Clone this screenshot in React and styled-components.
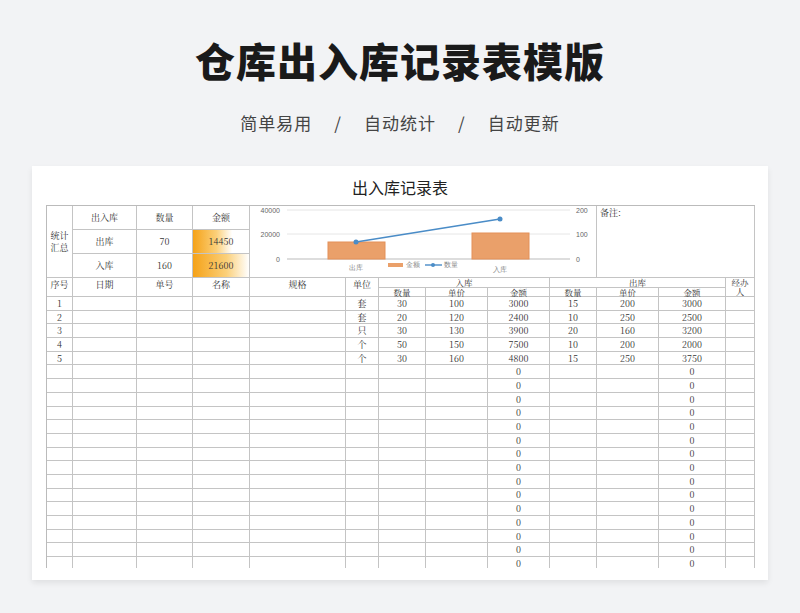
import React from "react";
import styled, { createGlobalStyle } from "styled-components";

const Global = createGlobalStyle`
  html,body{margin:0;padding:0;background:#f2f3f5;}
  body{width:800px;height:613px;overflow:hidden;font-family:"Noto Sans CJK SC","Noto Sans",sans-serif;}
`;
const Page = styled.div`display:flex;flex-direction:column;align-items:center;`;
const Title = styled.h1`margin:34px 0 0;font-size:40px;font-weight:900;color:#1a1a1a;letter-spacing:1px;line-height:52px;`;
const Sub = styled.div`margin-top:24px;font-size:17px;color:#444;letter-spacing:1px;display:flex;gap:22px;`;
const Card = styled.div`margin-top:31px;width:736px;height:414px;background:#fff;box-shadow:0 3px 6px rgba(0,0,0,.08);display:flex;flex-direction:column;align-items:flex-start;padding-left:14px;box-sizing:border-box;`;
const SheetTitle = styled.div`width:708px;text-align:center;font-family:"Noto Sans CJK SC",serif;font-size:16px;color:#222;margin-top:9px;height:30px;line-height:24px;`;
const Clip = styled.div`height:363px;overflow:hidden;width:709px;`;
const cols = "26px 64px 56px 57px 96px 33px 47px 62px 62px 47px 62px 67px 29px";
const Grid = styled.div`
  display:grid;grid-template-columns:${cols};
  grid-template-rows:24px 24px 24px 10px 9px repeat(20,13.7px);
  border-left:1px solid #bbb;border-top:1px solid #bbb;
  font-family:"Noto Serif CJK SC","Noto Sans CJK SC",serif;font-size:9px;color:#333;
`;
const Cell = styled.div`
  border-right:1px solid #c4c4c4;border-bottom:1px solid #c4c4c4;
  display:flex;align-items:center;justify-content:center;line-height:${p=>p.lh||1};
  text-align:center;white-space:nowrap;
  grid-column:${p=>p.c||"auto"};grid-row:${p=>p.r||"auto"};
  background:${p=>p.g?`linear-gradient(90deg,#f5a218 0%,#fbd07a ${p.g*0.6}%,#fff ${p.g}%)`:"#fff"};
  ${p=>p.top?"align-items:flex-start;justify-content:flex-start;padding:2px 3px;":""}
  ${p=>p.sm?"font-size:8.5px;":""}
`;
const Chart = styled.div`grid-column:5 / 11;grid-row:1 / 4;border-bottom:1px solid #c4c4c4;border-right:1px solid #c4c4c4;`;

function ChartSvg(){
  return (
    <svg width="350" height="72" viewBox="0 0 350 72" style={{display:"block",fontFamily:"Liberation Sans,sans-serif"}}>
      {[4,28,53].map(y=><line key={y} x1="37" x2="320" y1={y} y2={y} stroke={y===53?"#bbb":"#e6e6e6"} strokeWidth="1"/>)}
      <text x="30" y="7" fontSize="7" fill="#666" textAnchor="end">40000</text>
      <text x="30" y="31" fontSize="7" fill="#666" textAnchor="end">20000</text>
      <text x="30" y="56" fontSize="7" fill="#666" textAnchor="end">0</text>
      <text x="326" y="7" fontSize="7" fill="#666">200</text>
      <text x="326" y="31" fontSize="7" fill="#666">100</text>
      <text x="326" y="56" fontSize="7" fill="#666">0</text>
      <rect x="78" y="36" width="57" height="17" fill="#eaa06a" stroke="#e39058"/>
      <rect x="222" y="27" width="57" height="26" fill="#eaa06a" stroke="#e39058"/>
      <polyline points="106,36 250,13" fill="none" stroke="#4a8cc7" strokeWidth="1.6"/>
      <circle cx="106" cy="36" r="2.5" fill="#4a8cc7"/>
      <circle cx="250" cy="13" r="2.5" fill="#4a8cc7"/>
      <text x="106" y="64" fontSize="7" fill="#888" textAnchor="middle">出库</text>
      <text x="250" y="66" fontSize="7" fill="#888" textAnchor="middle">入库</text>
      <rect x="138" y="57" width="15" height="4" fill="#eaa06a"/>
      <text x="156" y="61" fontSize="7" fill="#888">金额</text>
      <line x1="175" x2="192" y1="59" y2="59" stroke="#4a8cc7" strokeWidth="1.4"/>
      <circle cx="183" cy="59" r="2" fill="#4a8cc7"/>
      <text x="194" y="61" fontSize="7" fill="#888">数量</text>
    </svg>
  );
}

const data = [
  ["1","套","30","100","3000","15","200","3000"],
  ["2","套","20","120","2400","10","250","2500"],
  ["3","只","30","130","3900","20","160","3200"],
  ["4","个","50","150","7500","10","200","2000"],
  ["5","个","30","160","4800","15","250","3750"],
];

export default function App(){
  const rows=[];
  for(let i=0;i<20;i++){
    const d=data[i];
    const v=d?[d[0],"","","","",d[1],d[2],d[3],d[4],d[5],d[6],d[7],""]:["","","","","","","","","0","","","0",""];
    v.forEach((t,j)=>rows.push(<Cell key={i+"-"+j}>{t}</Cell>));
  }
  return (<>
    <Global/>
    <Page>
      <Title>仓库出入库记录表模版</Title>
      <Sub><span>简单易用</span><span>/</span><span>自动统计</span><span>/</span><span>自动更新</span></Sub>
      <Card>
        <SheetTitle>出入库记录表</SheetTitle>
        <Clip>
          <Grid>
            <Cell c="1" r="1 / 4" lh={1.25}>统计<br/>汇总</Cell>
            <Cell c="2" r="1">出入库</Cell><Cell c="3" r="1">数量</Cell><Cell c="4" r="1">金额</Cell>
            <Cell c="2" r="2">出库</Cell><Cell c="3" r="2">70</Cell><Cell c="4" r="2" g={70}>14450</Cell>
            <Cell c="2" r="3">入库</Cell><Cell c="3" r="3">160</Cell><Cell c="4" r="3" g={100}>21600</Cell>
            <Chart><ChartSvg/></Chart>
            <Cell c="11 / 14" r="1 / 4" top>备注:</Cell>
            {["序号","日期","单号","名称","规格","单位"].map((t,i)=><Cell key={t} c={String(i+1)} r="4 / 6" style={{alignItems:"flex-start",paddingTop:2}}>{t}</Cell>)}
            <Cell c="7 / 10" r="4" sm>入库</Cell>
            <Cell c="10 / 13" r="4" sm>出库</Cell>
            <Cell c="13" r="4 / 6" sm lh={1.1} style={{alignItems:"flex-start",overflow:"hidden"}}>经办<br/>人</Cell>
            {["数量","单价","金额","数量","单价","金额"].map((t,i)=><Cell key={i} c={String(i+7)} r="5" sm>{t}</Cell>)}
            {rows}
          </Grid>
        </Clip>
      </Card>
    </Page>
  </>);
}
